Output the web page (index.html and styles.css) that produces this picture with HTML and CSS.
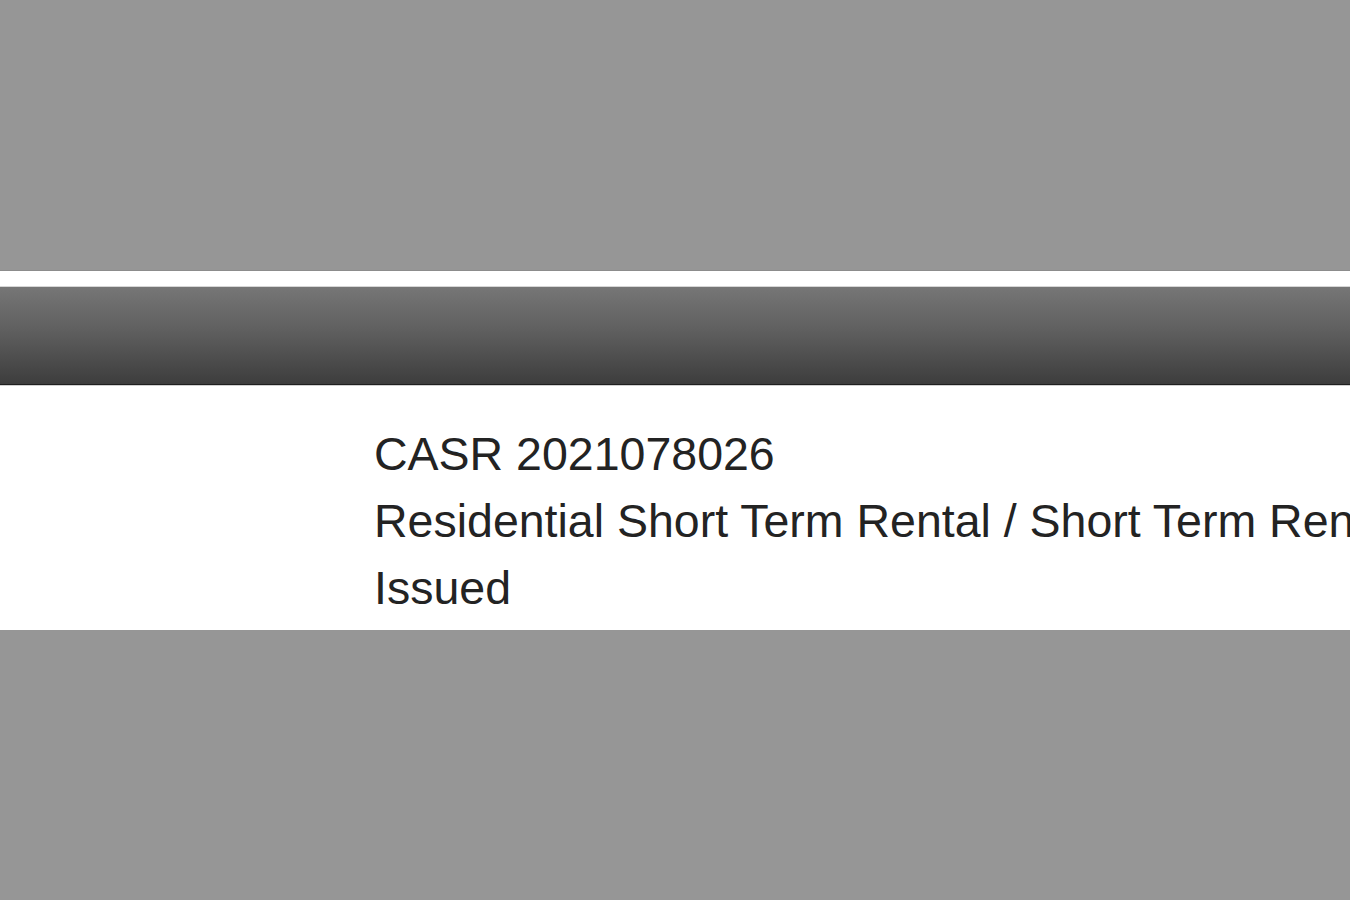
FILE: index.html
```html
<!DOCTYPE html>
<html lang="en">
<head>
<meta charset="utf-8">
<title>Permit record</title>
<link rel="stylesheet" href="styles.css">
</head>
<body>
  <div class="backdrop-top"></div>
  <div class="sheet">
    <div class="strip"></div>
    <div class="toolbar"></div>
    <div class="record">
      <div class="record-lines">
        <div class="line">CASR 2021078026</div>
        <div class="line">Residential Short Term Rental / Short Term Rental</div>
        <div class="line">Issued</div>
      </div>
    </div>
  </div>
  <div class="backdrop-bottom"></div>
</body>
</html>
```

FILE: styles.css
```css
html, body {
  margin: 0;
  padding: 0;
  background: #969696;
  overflow: hidden;
  width: 1350px;
  height: 900px;
}

.backdrop-top {
  height: 270px;
  background: #969696;
  border-bottom: 1px solid #8c8c8c;
}

.sheet {
  background: #ffffff;
}

.strip {
  height: 15px;
  background: #ffffff;
  border-bottom: 1px solid #d6d6d6;
}

.toolbar {
  height: 97px;
  background: linear-gradient(to bottom, #767676 0%, #5f5f5f 45%, #3d3d3d 100%);
  border-bottom: 1px solid #1f1f1f;
}

/* record panel: the long type line runs past the window edge and is clipped */
.record {
  border-top: 1px solid #d0d0d0;
  padding: 35px 0 8px 374px;
  overflow: hidden;
}

.record-lines {
  font-family: "Liberation Sans", Arial, Helvetica, sans-serif;
  font-size: 46.5px;
  line-height: 67px;
  color: #232323;
  white-space: nowrap;
}

.line {
  height: 67px;
}

.backdrop-bottom {
  height: 270px;
  background: #969696;
}
```
